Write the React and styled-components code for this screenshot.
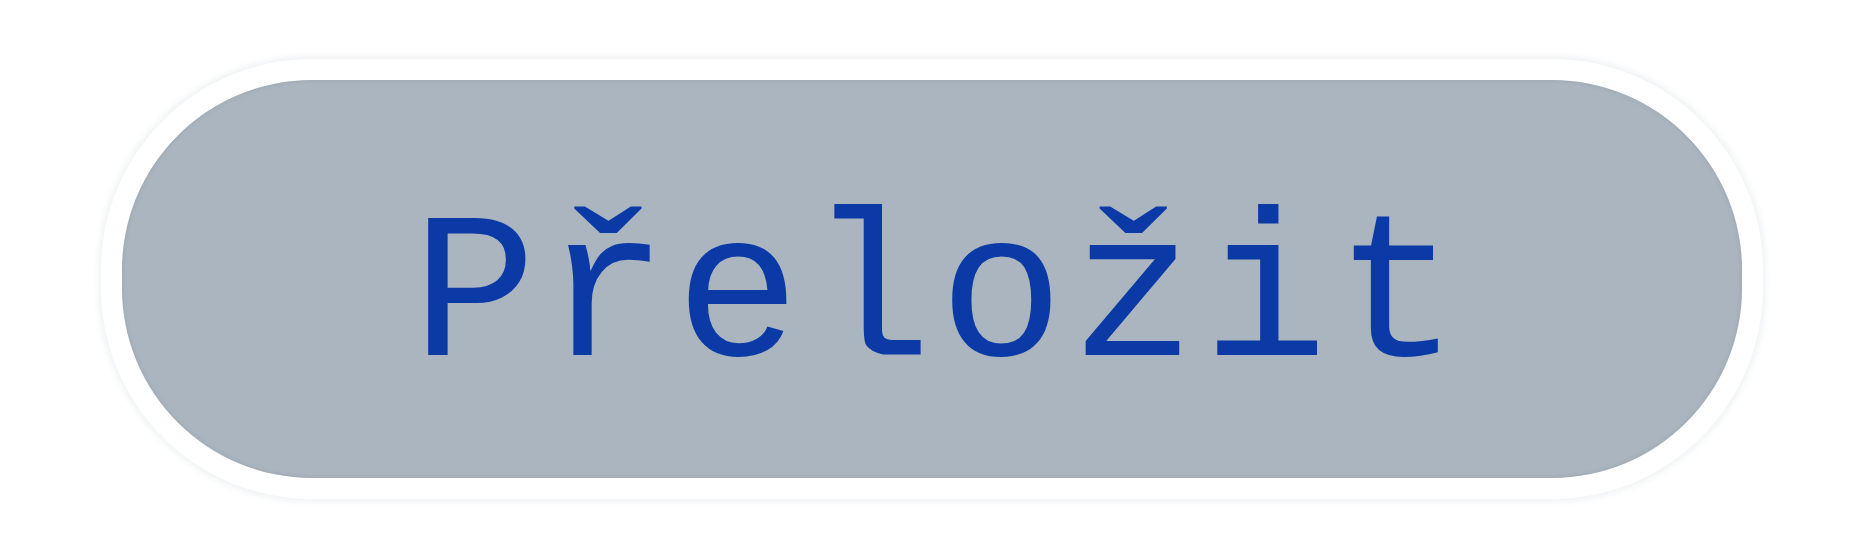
import React from "react";
import styled, { createGlobalStyle } from "styled-components";

const GlobalStyle = createGlobalStyle`
  html, body {
    margin: 0;
    padding: 0;
    background: #ffffff;
  }
`;

export default function App() {
  return (
    <>
      <GlobalStyle />
      <Page>
        <TranslateButton type="button">
          <Label>Přeložit</Label>
        </TranslateButton>
      </Page>
    </>
  );
}

const Page = styled.div`
  width: 1852px;
  height: 560px;
  box-sizing: border-box;
  padding: 80px 0 0 122px;
`;

const TranslateButton = styled.button`
  display: flex;
  align-items: center;
  justify-content: center;
  width: 1620px;
  height: 398px;
  padding: 0;
  border: none;
  border-radius: 190px;
  background: #aab5bf;
  box-shadow: inset 0 0 4px rgba(120, 135, 150, 0.4), 0 0 0 21px #ffffff,
    0 0 6px 24px #f0f2f5;
  cursor: pointer;
`;

const Label = styled.span`
  display: block;
  padding-top: 42px;
  margin-left: 14px;
  color: #0b3aa6;
  font-family: "Liberation Mono", "Courier New", monospace;
  font-size: 208px;
  line-height: 1;
  letter-spacing: 7px;
  -webkit-text-stroke: 3px #aab5bf;
  paint-order: stroke fill;
`;
